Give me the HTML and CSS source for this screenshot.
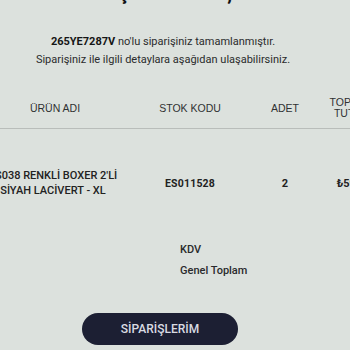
FILE: index.html
```html
<!DOCTYPE html>
<html lang="tr">
<head>
<meta charset="utf-8">
<title>Sipariş</title>
<link rel="stylesheet" href="styles.css">
</head>
<body>
<div class="page">
  <h1 class="title">TEŞEKKÜRLER,</h1>
  <p class="intro"><b>265YE7287V</b> no'lu siparişiniz tamamlanmıştır.<br>Siparişiniz ile ilgili detaylara aşağıdan ulaşabilirsiniz.</p>
  <div class="table">
    <div class="thead">
      <div class="cell">ÜRÜN ADI</div>
      <div class="cell">STOK KODU</div>
      <div class="cell">ADET</div>
      <div class="cell total-head">TOPLAM TUTAR</div>
    </div>
    <div class="trow">
      <div class="cell name">ES038 RENKLİ BOXER 2'Lİ SİYAH LACİVERT - XL</div>
      <div class="cell code">ES011528</div>
      <div class="cell qty">2</div>
      <div class="cell price">₺59,90</div>
    </div>
  </div>
  <div class="totals">
    <div class="tot-line">KDV</div>
    <div class="tot-line">Genel Toplam</div>
  </div>
  <div class="actions">
    <a class="btn" href="#">SİPARİŞLERİM</a>
  </div>
</div>
</body>
</html>
```

FILE: styles.css
```css
html, body {
  margin: 0;
  padding: 0;
  background: #dce1dd;
}
body {
  width: 350px;
  height: 350px;
  overflow: hidden;
  font-family: Roboto, "Liberation Sans", Arial, sans-serif;
  color: #262728;
}
.page {
  width: 326px;
  padding-right: 24px;
}
.title {
  margin: -19px 0 0;
  font-size: 20px;
  line-height: 24px;
  font-weight: 700;
  text-align: center;
  color: #111;
}
.intro {
  margin: 28px 0 0;
  font-size: 11px;
  line-height: 18px;
  text-align: center;
  color: #2a2b2c;
}
.intro b {
  font-weight: 700;
  color: #151515;
}
.table {
  margin-top: 19px;
  margin-left: -25px;
  width: 400px;
}
.thead, .trow {
  display: grid;
  grid-template-columns: 160px 110px 80px 50px;
  align-items: center;
}
.thead {
  height: 40px;
  border-bottom: 1px solid #b9bdba;
  font-family: "Liberation Sans", Arial, sans-serif;
  font-size: 10.5px;
  color: #303132;
}
.cell {
  text-align: center;
}
.total-head {
  line-height: 11px;
  padding-left: 2px;
}
.trow {
  height: 108px;
  font-size: 11px;
}
.name {
  font-weight: 500;
  line-height: 15px;
  padding: 0 4px 0 0;
  color: #222;
}
.code, .qty, .price {
  font-weight: 700;
  color: #222;
}
.code {
  font-size: 10.5px;
  letter-spacing: 0.2px;
}
.price {
  padding-left: 8px;
}
.totals {
  margin-left: 180px;
  padding-top: 2px;
  display: flex;
  flex-direction: column;
}
.tot-line {
  font-size: 11px;
  line-height: 21px;
  font-weight: 500;
  color: #2a2b2c;
}
.actions {
  margin-top: 32px;
  margin-left: 82px;
}
.btn {
  display: flex;
  align-items: center;
  justify-content: center;
  width: 156px;
  height: 32px;
  border-radius: 16px;
  background: #1c1f33;
  color: #d9dbe2;
  font-size: 12px;
  font-weight: 500;
  text-decoration: none;
}
```
